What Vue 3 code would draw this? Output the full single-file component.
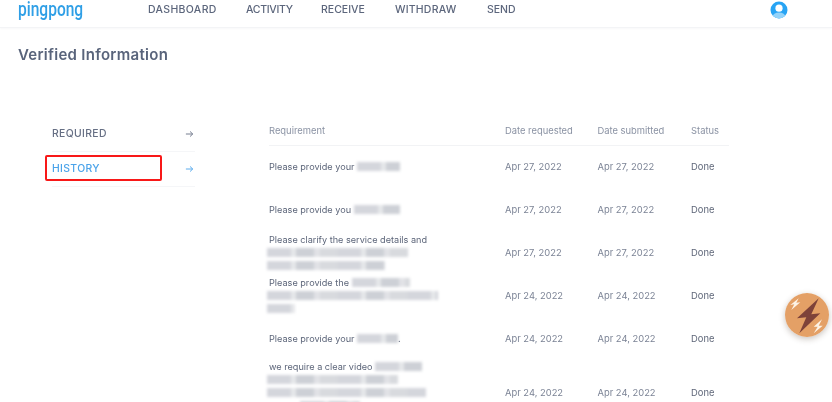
<script setup>
const navItems = ['DASHBOARD', 'ACTIVITY', 'RECEIVE', 'WITHDRAW', 'SEND']

const rows = [
  { date1: 'Apr 27, 2022', date2: 'Apr 27, 2022', lines: [{ text: 'Please provide your', blur: 43 }] },
  { date1: 'Apr 27, 2022', date2: 'Apr 27, 2022', lines: [{ text: 'Please provide you', blur: 46 }] },
  { date1: 'Apr 27, 2022', date2: 'Apr 27, 2022', lines: [
    { text: 'Please clarify the service details and' },
    { text: '', blur: 141 },
    { text: '', blur: 118 }
  ] },
  { date1: 'Apr 24, 2022', date2: 'Apr 24, 2022', lines: [
    { text: 'Please provide the', blur: 58 },
    { text: '', blur: 171 },
    { text: '', blur: 28 }
  ] },
  { date1: 'Apr 24, 2022', date2: 'Apr 24, 2022', lines: [{ text: 'Please provide your', blur: 41, end: '.' }] },
  { date1: 'Apr 24, 2022', date2: 'Apr 24, 2022', lines: [
    { text: 'we require a clear video', blur: 47 },
    { text: '', blur: 131 },
    { text: '', blur: 159 },
    { text: 'with a ', blur: 60 },
    { text: '', blur: 60 }
  ] }
]
</script>

<template>
  <div class="page">
    <header class="topbar">
      <div class="logo-box"><span class="logo">pingpong</span></div>
      <nav class="nav">
        <a v-for="item in navItems" :key="item" class="nav-link">{{ item }}</a>
      </nav>
      <svg class="avatar" viewBox="0 0 18 18" aria-hidden="true">
        <defs>
          <clipPath id="avatar-clip"><circle cx="9" cy="9" r="8.5" /></clipPath>
        </defs>
        <circle cx="9" cy="9" r="8.5" fill="#27a4f4" />
        <g clip-path="url(#avatar-clip)">
          <ellipse cx="9" cy="16" rx="6.5" ry="4.5" fill="#93d3fa" />
          <circle cx="9" cy="7.2" r="3.6" fill="#ffffff" />
        </g>
      </svg>
    </header>

    <h1 class="title">Verified Information</h1>

    <section class="content">
      <aside class="side">
        <div class="side-item">
          <span>REQUIRED</span>
          <svg class="arrow" viewBox="0 0 10 8" aria-hidden="true">
            <path d="M1 4h7.4M5.6 1.2 8.6 4 5.6 6.8" fill="none" stroke="currentColor" stroke-width="1" />
          </svg>
        </div>
        <div class="side-item active">
          <span>HISTORY</span>
          <svg class="arrow" viewBox="0 0 10 8" aria-hidden="true">
            <path d="M1 4h7.4M5.6 1.2 8.6 4 5.6 6.8" fill="none" stroke="currentColor" stroke-width="1" />
          </svg>
          <div class="marker"></div>
        </div>
      </aside>

      <div class="table">
        <div class="row head">
          <div class="c-req">Requirement</div>
          <div class="c-date">Date requested</div>
          <div class="c-sub">Date submitted</div>
          <div class="c-status">Status</div>
        </div>
        <div v-for="(row, i) in rows" :key="i" class="row body">
          <div class="c-req">
            <div v-for="(line, j) in row.lines" :key="j" class="line">
              <span v-if="line.text">{{ line.text }}&nbsp;</span><span
                v-if="line.blur"
                class="smudge"
                :class="{ flush: !line.text }"
                :style="{ width: line.blur + 'px' }"
              ></span><span v-if="line.end">{{ line.end }}</span>
            </div>
          </div>
          <div class="c-date">{{ row.date1 }}</div>
          <div class="c-sub">{{ row.date2 }}</div>
          <div class="c-status done">Done</div>
        </div>
      </div>
    </section>

    <div class="fab">
      <svg viewBox="0 0 44 44" aria-hidden="true">
        <circle cx="22" cy="22" r="22" fill="#e4a066" />
        <path d="M33.7 5.3 12 25.3l9.3-1-7 16 21-20-9 1z" fill="#7e4239" />
        <path d="M13.7 5.3 5.3 12l4-.7-3 5.7 9-7.7-4 .4z" fill="#fdf3e6" />
        <path d="M37 26.3 28.7 33.7h4l-4 6.6 9-7.6h-4z" fill="#fdf3e6" />
      </svg>
    </div>
  </div>
</template>

<style scoped>
.page {
  position: relative;
  width: 832px;
  height: 402px;
  overflow: hidden;
  background: #ffffff;
  font-family: Inter, "Open Sans", sans-serif;
  color: #5b6478;
  filter: blur(0.35px);
}
.topbar {
  display: flex;
  align-items: center;
  height: 28px;
  padding: 0 44px 8px 18px;
  box-sizing: border-box;
  border-bottom: 1px solid #f3f4f6;
  box-shadow: 0 1px 2px rgba(30, 40, 60, 0.03);
}
.logo-box {
  width: 130px;
  flex: none;
}
.logo {
  display: inline-block;
  font-family: Roboto, sans-serif;
  font-size: 21px;
  font-weight: 500;
  line-height: 20px;
  color: #2f9fe6;
  transform: scaleX(0.74);
  transform-origin: left center;
}
.nav {
  display: grid;
  grid-template-columns: 98px 75px 74px 92px auto;
  flex: 1;
}
.nav-link {
  font-size: 10.5px;
  font-weight: 500;
  letter-spacing: 0.35px;
  color: #5c667c;
}
.nav-link:nth-child(2) {
  letter-spacing: -0.3px;
}
.nav-link:nth-child(3),
.nav-link:nth-child(5) {
  letter-spacing: 0;
}
.nav-link:nth-child(4) {
  letter-spacing: 0.2px;
}
.avatar {
  width: 18px;
  height: 18px;
  flex: none;
}
.title {
  margin: 17px 0 0 18px;
  font-size: 15px;
  line-height: 20px;
  font-weight: 600;
  letter-spacing: 0.28px;
  color: #59647b;
}
.content {
  display: flex;
  margin-top: 51px;
  padding-left: 52px;
  gap: 74px;
}
.side {
  width: 143px;
  flex: none;
  padding-top: 1px;
}
.side-item {
  position: relative;
  display: flex;
  align-items: center;
  justify-content: space-between;
  height: 35px;
  box-sizing: border-box;
  padding-bottom: 1px;
  border-bottom: 1px solid #f5f6f8;
  font-size: 10.4px;
  font-weight: 500;
  letter-spacing: 0.35px;
  color: #666f84;
}
.side-item.active {
  color: #4aa3ea;
}
.arrow {
  width: 9px;
  height: 8px;
  margin-right: 1px;
}
.marker {
  position: absolute;
  left: -7px;
  top: 3px;
  width: 117px;
  height: 26px;
  box-sizing: border-box;
  border: 2px solid #f81818;
  border-radius: 2px;
}
.table {
  width: 460px;
  flex: none;
}
.row {
  display: flex;
  align-items: center;
  font-size: 9.4px;
}
.head {
  height: 30px;
  box-sizing: border-box;
  padding-bottom: 1px;
  border-bottom: 1px solid #f2f3f5;
  color: #8a92a3;
}
.body {
  min-height: 43px;
  box-sizing: border-box;
}
.c-req {
  width: 236px;
  flex: none;
}
.c-date {
  width: 92.5px;
  flex: none;
}
.c-sub {
  width: 93.5px;
  flex: none;
}
.c-status {
  flex: 1;
}
.body .c-date,
.body .c-sub {
  color: #7b8395;
}
.body .c-date,
.body .c-sub,
.body .c-status {
  padding-bottom: 2px;
}
.done {
  color: #5f6779;
}
.line {
  display: flex;
  align-items: center;
  height: 13px;
  box-sizing: border-box;
  padding-bottom: 2px;
  line-height: 11px;
  font-size: 9.15px;
  white-space: nowrap;
  color: #5c6579;
}
.smudge {
  display: inline-block;
  height: 9px;
  background: repeating-linear-gradient(90deg, #d4d6dc 0 24px, #e6e7ea 24px 29px, #cdd0d6 29px 47px, #e1e2e6 47px 53px, #d8dade 53px 70px);
  filter: blur(1.8px);
}
.smudge.flush {
  margin-left: -2px;
}
.fab {
  position: absolute;
  left: 785px;
  top: 293px;
  width: 44px;
  height: 44px;
  border-radius: 50%;
  box-shadow: 0 2px 6px rgba(60, 40, 20, 0.28);
}
.fab svg {
  display: block;
  width: 44px;
  height: 44px;
}
</style>
